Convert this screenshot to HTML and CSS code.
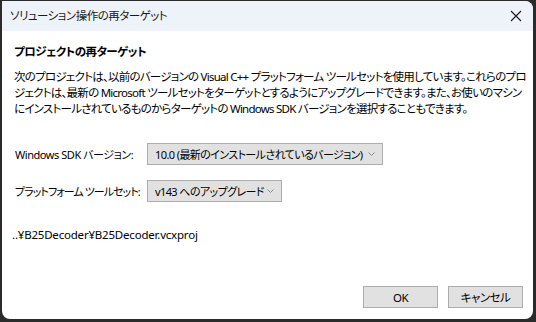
FILE: index.html
```html
<!DOCTYPE html>
<html lang="ja">
  <head>
    <meta charset="UTF-8" />
    <meta name="viewport" content="width=device-width, initial-scale=1.0" />
    <title>ソリューション操作の再ターゲット</title>
    <link rel="stylesheet" href="styles.css">
  </head>
  <body>
    <div class="dialog">
      <div class="titlebar">
        <span class="title">ソリューション操作の再ターゲット</span>
        <svg class="close" width="12" height="12" viewBox="0 0 12 12">
          <path d="M1 1 L11 11 M11 1 L1 11" stroke="#1a1a1a" stroke-width="1.1" fill="none" />
        </svg>
      </div>

      <div class="content">
        <h1 class="heading">プロジェクトの再ターゲット</h1>
        <p class="desc">
          次のプロジェクトは、以前のバージョンの Visual C++ プラットフォーム ツールセットを使用しています。これらのプロ<br>
          ジェクトは、最新の Microsoft ツールセットをターゲットとするようにアップグレードできます。また、お使いのマシン<br>
          にインストールされているものからターゲットの Windows SDK バージョンを選択することもできます。
        </p>

        <div class="form">
          <label class="label">Windows SDK バージョン:</label>
          <div class="combo combo-sdk">
            <span>10.0 (最新のインストールされているバージョン)</span>
            <svg class="chevron" width="7" height="4" viewBox="0 0 7 4">
              <path d="M0.5 0.5 L3.5 3.5 L6.5 0.5" stroke="#8a8a8a" stroke-width="1" fill="none" />
            </svg>
          </div>
          <label class="label label-tight">プラットフォーム ツールセット:</label>
          <div class="combo combo-tool">
            <span>v143 へのアップグレード</span>
            <svg class="chevron" width="7" height="4" viewBox="0 0 7 4">
              <path d="M0.5 0.5 L3.5 3.5 L6.5 0.5" stroke="#8a8a8a" stroke-width="1" fill="none" />
            </svg>
          </div>
        </div>

        <div class="project">..¥B25Decoder¥B25Decoder.vcxproj</div>
      </div>

      <div class="buttons">
        <button class="btn">OK</button>
        <button class="btn">キャンセル</button>
      </div>
    </div>
  </body>
</html>
```

FILE: styles.css
```css
* {
  margin: 0;
  padding: 0;
  box-sizing: border-box;
}
body {
  background: #2b2b2b;
  width: 536px;
  height: 322px;
  padding: 1px 3px 3px 2px;
  font-family: "Noto Sans", "Noto Sans CJK JP", sans-serif;
  font-size: 11.5px;
  letter-spacing: -0.5px;
  font-feature-settings: "palt";
  color: #000;
  overflow: hidden;
}
.dialog {
  background: white;
  width: 531px;
  height: 318px;
  border-radius: 0 8px 8px 8px;
  overflow: hidden;
  display: flex;
  flex-direction: column;
}
.titlebar {
  background: #eef2f9;
  height: 30px;
  display: flex;
  align-items: center;
  justify-content: space-between;
  padding: 0 11px 0 8px;
}
.title {
  color: #1a1a1a;
  line-height: 16px;
}
.content {
  padding: 0 12px;
}
.heading {
  font-size: 11.5px;
  font-weight: bold;
  line-height: 16px;
  margin-top: 13px;
}
.desc {
  line-height: 16px;
  margin-top: 9px;
  white-space: nowrap;
  letter-spacing: -0.75px;
}
.form {
  display: grid;
  grid-template-columns: 133px auto;
  row-gap: 15px;
  align-items: center;
  justify-items: start;
  margin-top: 26px;
}
.label {
  white-space: nowrap;
  font-size: 11px;
  letter-spacing: -0.45px;
  padding-left: 1px;
}
.label-tight {
  letter-spacing: -0.95px;
}
.combo {
  height: 22px;
  background: #e1e1e1;
  border: 1px solid #adadad;
  display: flex;
  align-items: center;
  justify-content: space-between;
  padding: 0 7px 0 7px;
  white-space: nowrap;
  font-size: 11px;
  letter-spacing: -0.6px;
}
.combo-sdk {
  width: 236px;
}
.combo-tool {
  width: 135px;
}
.chevron {
  flex-shrink: 0;
}
.project {
  margin-top: 25px;
  margin-left: -2px;
  line-height: 16px;
  letter-spacing: -0.2px;
}
.buttons {
  margin-top: auto;
  display: flex;
  justify-content: flex-end;
  gap: 10px;
  padding: 0 10px 11px 0;
}
.btn {
  width: 75px;
  height: 22px;
  background: #e1e1e1;
  border: 1px solid #adadad;
  font-family: inherit;
  font-size: 11.5px;
  letter-spacing: -0.5px;
  font-feature-settings: "palt";
  color: #000;
}
```
